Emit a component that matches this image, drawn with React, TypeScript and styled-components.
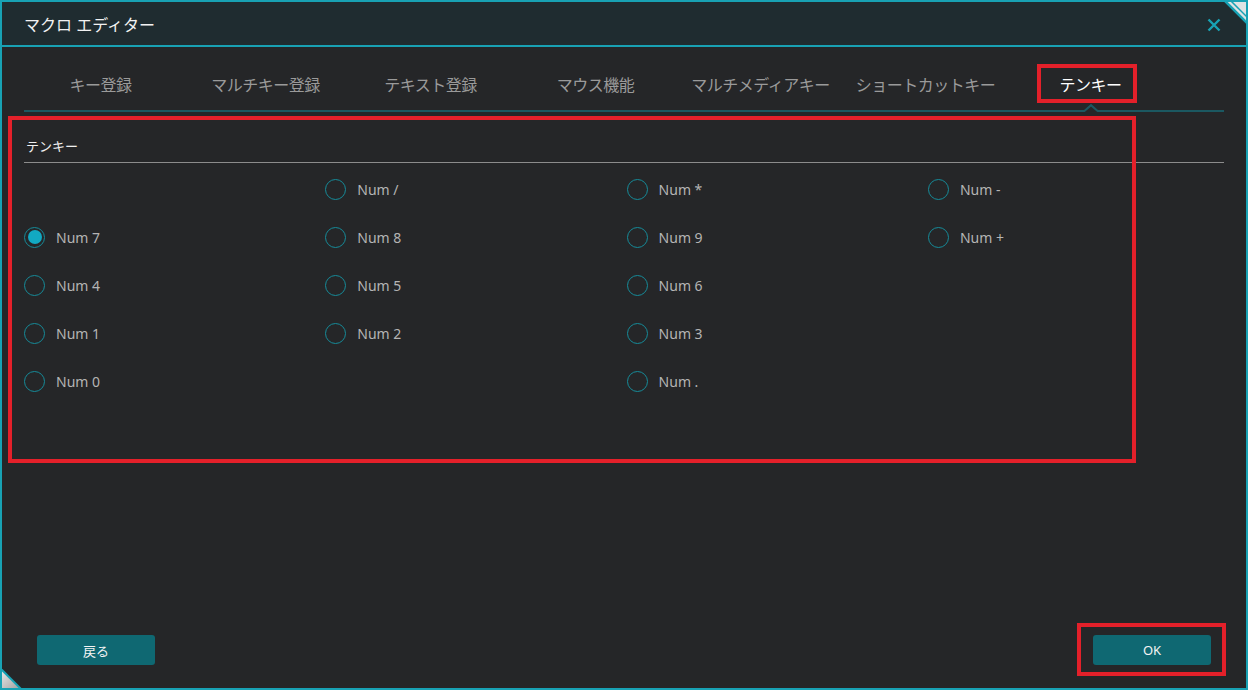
import React from 'react';
import styled, { createGlobalStyle } from 'styled-components';

const GlobalStyle = createGlobalStyle`
  html, body {
    margin: 0;
    padding: 0;
    background: #252628;
  }
  * { box-sizing: border-box; }
`;

const teal = '#18a2b4';

const Window = styled.div`
  position: relative;
  width: 1248px;
  height: 690px;
  display: flex;
  flex-direction: column;
  background: #252628;
  border: 2px solid ${teal};
  font-family: 'Noto Sans', 'Noto Sans CJK JP', sans-serif;
  overflow: hidden;
`;

const TitleBar = styled.div`
  height: 45px;
  flex: none;
  display: flex;
  align-items: center;
  justify-content: space-between;
  padding: 0 24px 0 22px;
  background: #1f2c30;
  border-bottom: 2px solid ${teal};
`;

const Title = styled.div`
  color: #f2f2f2;
  font-size: 16px;
`;

const CloseButton = styled.div`
  width: 16px;
  height: 16px;
  display: flex;
  align-items: center;
  justify-content: center;
  margin-top: 2px;
`;

const Body = styled.div`
  flex: 1;
  display: flex;
  flex-direction: column;
  padding: 0 22px;
`;

const TabBar = styled.div`
  height: 65px;
  display: flex;
  border-bottom: 2px solid #1b5861;
`;

const TabList = styled.div`
  display: flex;
  margin-left: -6px;
`;

const Tab = styled.div<{ $active?: boolean }>`
  position: relative;
  width: 165px;
  display: flex;
  align-items: center;
  justify-content: center;
  padding-top: 10px;
  font-size: 16px;
  color: ${({ $active }) => ($active ? '#ffffff' : '#9a9a9a')};
  letter-spacing: -0.5px;
`;

const Caret = styled.svg`
  position: absolute;
  left: 50%;
  bottom: -2px;
  margin-left: -9px;
`;

const SectionHeader = styled.div`
  padding: 24px 0 6px 2px;
  border-bottom: 1px solid #8c8c8c;
  color: #f0f0f0;
  font-size: 13px;
  line-height: 20px;
`;

const RadioGrid = styled.div`
  margin-top: 2px;
  display: grid;
  grid-template-columns: repeat(4, 301.3px);
  grid-auto-rows: 48px;
`;

const RadioItem = styled.label`
  display: flex;
  align-items: center;
  gap: 11px;
  color: #b4b4b4;
  font-size: 14px;
`;

const RadioCircle = styled.span<{ $checked?: boolean }>`
  width: 21px;
  height: 21px;
  border-radius: 50%;
  border: 1.5px solid #168b99;
  display: flex;
  align-items: center;
  justify-content: center;
  &::after {
    content: '';
    width: 14px;
    height: 14px;
    border-radius: 50%;
    background: ${({ $checked }) => ($checked ? '#12a9c2' : 'transparent')};
  }
`;

const Footer = styled.div`
  flex: none;
  display: flex;
  justify-content: space-between;
  padding: 0 35px 23px 35px;
`;

const Button = styled.div`
  width: 118px;
  height: 30px;
  border-radius: 3px;
  background: #0f6872;
  color: #f4f4f4;
  font-size: 13px;
  display: flex;
  align-items: center;
  justify-content: center;
`;

const Highlight = styled.div<{ $x: number; $y: number; $w: number; $h: number }>`
  position: absolute;
  left: ${({ $x }) => $x - 2}px;
  top: ${({ $y }) => $y - 2}px;
  width: ${({ $w }) => $w}px;
  height: ${({ $h }) => $h}px;
  border: 4px solid #e4202a;
  pointer-events: none;
`;

const Corner = styled.svg<{ $pos: 'tr' | 'bl' }>`
  position: absolute;
  ${({ $pos }) => ($pos === 'tr' ? 'top: -2px; right: -2px;' : 'bottom: -2px; left: -2px;')}
`;

const tabs = ['キー登録', 'マルチキー登録', 'テキスト登録', 'マウス機能', 'マルチメディアキー', 'ショートカットキー', 'テンキー'];

const keys: (string | null)[] = [
  null, 'Num /', 'Num *', 'Num -',
  'Num 7', 'Num 8', 'Num 9', 'Num +',
  'Num 4', 'Num 5', 'Num 6', null,
  'Num 1', 'Num 2', 'Num 3', null,
  'Num 0', null, 'Num .', null,
];

export default function App() {
  return (
    <>
      <GlobalStyle />
      <Window>
        <TitleBar>
          <Title>マクロ エディター</Title>
          <CloseButton>
            <svg width="14" height="14" viewBox="0 0 14 14">
              <path d="M1.5 1.5 L12.5 12.5 M12.5 1.5 L1.5 12.5" stroke={teal} strokeWidth="2.4" />
            </svg>
          </CloseButton>
        </TitleBar>
        <Body>
          <TabBar>
            <TabList>
              {tabs.map((t, i) => (
                <Tab key={t} $active={i === tabs.length - 1}>
                  {t}
                  {i === tabs.length - 1 && (
                    <Caret width="18" height="9" viewBox="0 0 18 9">
                      <path d="M0 9 L0 7 L2 7 L9 1 L16 7 L18 7 L18 9 Z" fill="#252628" />
                      <path d="M0 8 L2.4 8 L9 2.2 L15.6 8 L18 8" stroke="#1b5861" strokeWidth="2" fill="none" />
                    </Caret>
                  )}
                </Tab>
              ))}
            </TabList>
          </TabBar>
          <SectionHeader>テンキー</SectionHeader>
          <RadioGrid>
            {keys.map((k, i) =>
              k ? (
                <RadioItem key={i}>
                  <RadioCircle $checked={k === 'Num 7'} />
                  {k}
                </RadioItem>
              ) : (
                <span key={i} />
              )
            )}
          </RadioGrid>
        </Body>
        <Footer>
          <Button>戻る</Button>
          <Button>OK</Button>
        </Footer>

        <Corner $pos="tr" width="26" height="26" viewBox="0 0 26 26">
          <path d="M2 0 L26 0 L26 24 Z" fill="#dfe3e4" />
          <path d="M2 0 L26 24" stroke={teal} strokeWidth="2.5" />
          <path d="M8 0 L26 18" stroke={teal} strokeWidth="1.5" />
        </Corner>
        <Corner $pos="bl" width="26" height="26" viewBox="0 0 26 26">
          <defs>
            <linearGradient id="blg" x1="0" y1="0" x2="1" y2="1">
              <stop offset="0" stopColor="#f0f0f0" />
              <stop offset="1" stopColor="#9a9a9a" />
            </linearGradient>
          </defs>
          <path d="M0 4 L22 26 L0 26 Z" fill="url(#blg)" />
          <path d="M0 4 L22 26" stroke={teal} strokeWidth="2" />
        </Corner>

        <Highlight $x={1037} $y={64} $w={100} $h={39} />
        <Highlight $x={8} $y={116} $w={1128} $h={347} />
        <Highlight $x={1077} $y={623} $w={149} $h={53} />
      </Window>
    </>
  );
}
